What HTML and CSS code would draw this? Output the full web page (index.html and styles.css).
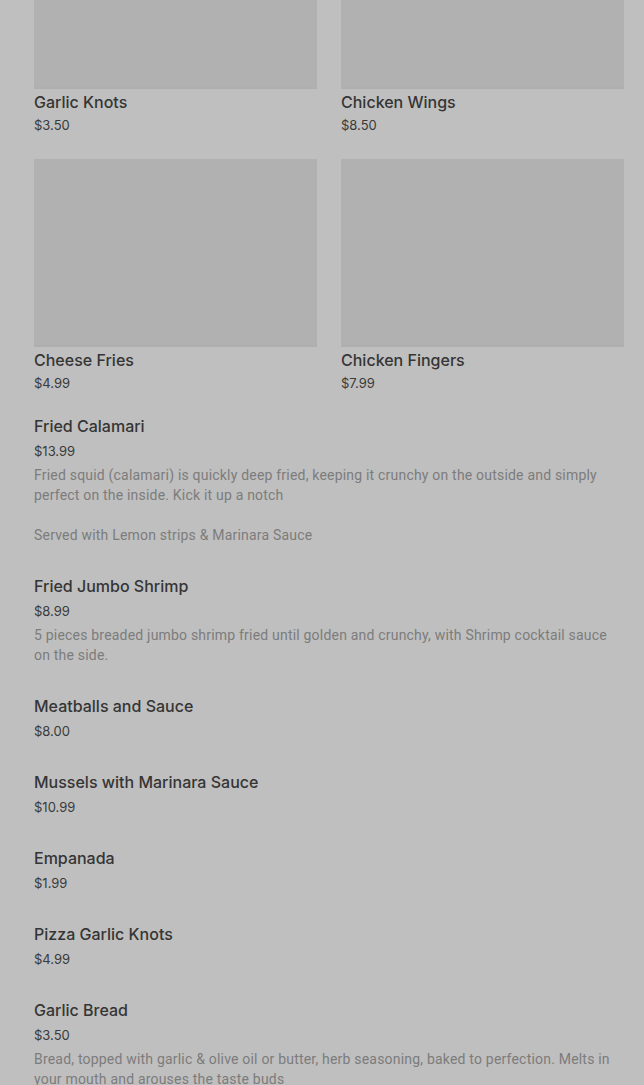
FILE: index.html
```html
<!DOCTYPE html>
<html lang="en">
<head>
<meta charset="utf-8">
<title>Menu</title>
<link rel="stylesheet" href="styles.css">
</head>
<body>
<main class="page">
  <section class="grid">
    <article class="card">
      <div class="card-img"></div>
      <h3 class="card-title">Garlic Knots</h3>
      <div class="card-price">$3.50</div>
    </article>
    <article class="card">
      <div class="card-img"></div>
      <h3 class="card-title">Chicken Wings</h3>
      <div class="card-price">$8.50</div>
    </article>
    <article class="card">
      <div class="card-img"></div>
      <h3 class="card-title">Cheese Fries</h3>
      <div class="card-price">$4.99</div>
    </article>
    <article class="card">
      <div class="card-img"></div>
      <h3 class="card-title">Chicken Fingers</h3>
      <div class="card-price">$7.99</div>
    </article>
  </section>
  <section class="list">
    <article class="item">
      <h3 class="item-title">Fried Calamari</h3>
      <div class="item-price">$13.99</div>
      <p class="item-desc">Fried squid (calamari) is quickly deep fried, keeping it crunchy on the outside and simply perfect on the inside. Kick it up a notch

Served with Lemon strips &amp; Marinara Sauce</p>
    </article>
    <article class="item">
      <h3 class="item-title">Fried Jumbo Shrimp</h3>
      <div class="item-price">$8.99</div>
      <p class="item-desc">5 pieces breaded jumbo shrimp fried until golden and crunchy, with Shrimp cocktail sauce on the side.</p>
    </article>
    <article class="item">
      <h3 class="item-title">Meatballs and Sauce</h3>
      <div class="item-price">$8.00</div>
    </article>
    <article class="item">
      <h3 class="item-title">Mussels with Marinara Sauce</h3>
      <div class="item-price">$10.99</div>
    </article>
    <article class="item">
      <h3 class="item-title">Empanada</h3>
      <div class="item-price">$1.99</div>
    </article>
    <article class="item">
      <h3 class="item-title">Pizza Garlic Knots</h3>
      <div class="item-price">$4.99</div>
    </article>
    <article class="item">
      <h3 class="item-title">Garlic Bread</h3>
      <div class="item-price">$3.50</div>
      <p class="item-desc">Bread, topped with garlic &amp; olive oil or butter, herb seasoning, baked to perfection. Melts in your mouth and arouses the taste buds</p>
    </article>
  </section>
</main>
</body>
</html>
```
FILE: styles.css
```css
html, body {
  margin: 0;
  padding: 0;
  background: #bfbfbf;
}
body {
  font-family: Inter, "Liberation Sans", sans-serif;
  color: #333333;
  overflow: hidden;
}
.page {
  padding: 0 20px 0 34px;
  margin-top: -99px;
}
.grid {
  display: grid;
  grid-template-columns: 1fr 1fr;
  column-gap: 24px;
  row-gap: 24px;
}
.card-img {
  height: 188px;
  background: #b1b1b1;
  box-shadow: inset 0 -2px 0 #afafaf;
}
.card-title {
  margin: 1px 0 0;
  font-size: 16px;
  font-weight: 500;
  line-height: 24px;
  color: #353535;
}
.card-price {
  margin-top: 1px;
  font-size: 13px;
  line-height: 20px;
  color: #3a3a3a;
}
.list {
  margin-top: 21px;
}
.item {
  padding-bottom: 29px;
}
.item-title {
  margin: 0;
  font-size: 16px;
  font-weight: 500;
  line-height: 24px;
  color: #353535;
}
.item-price {
  margin-top: 3px;
  font-size: 13px;
  line-height: 20px;
  color: #3a3a3a;
}
.item-desc {
  margin: 4px 0 0;
  font-family: Roboto, "Liberation Sans", sans-serif;
  font-size: 14px;
  letter-spacing: 0.2px;
  line-height: 20px;
  color: #7c7c7c;
  white-space: pre-line;
}
```
